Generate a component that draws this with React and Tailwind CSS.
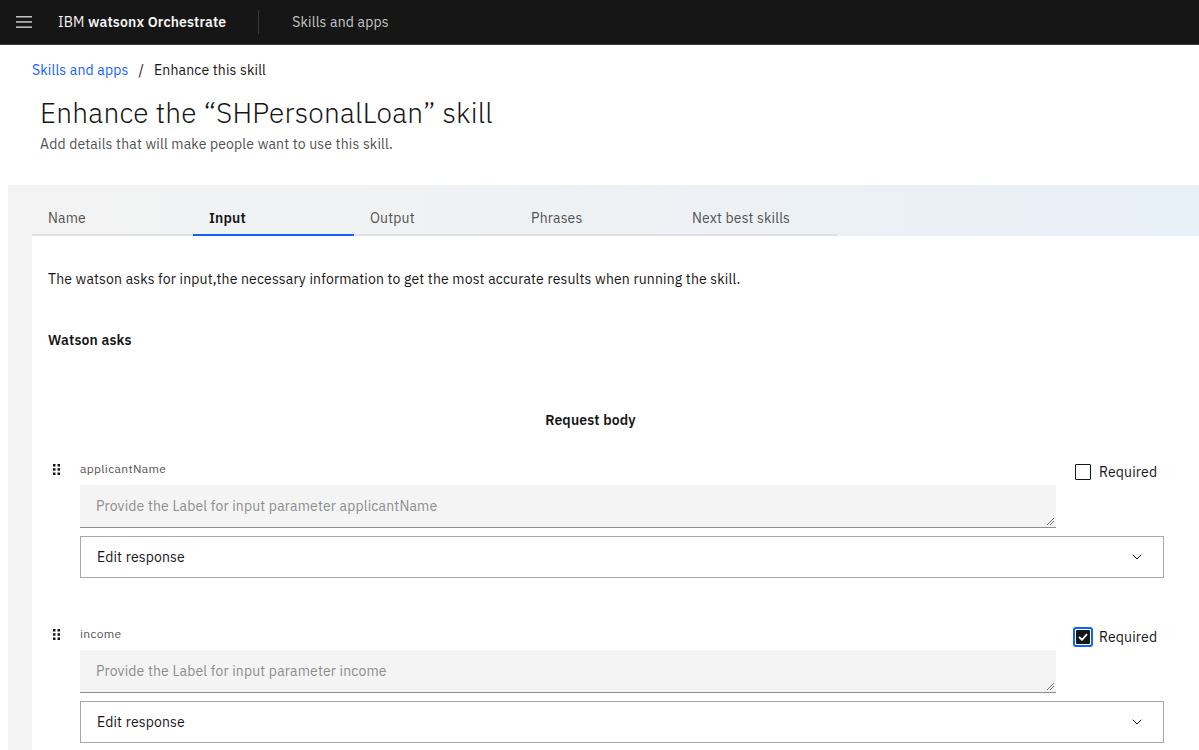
import { ChevronDown } from "lucide-react";

const tabs = ["Name", "Input", "Output", "Phrases", "Next best skills"];

const params = [
    { name: "applicantName", required: false },
    { name: "income", required: true },
];

const DragHandle = () => (
    <svg width="7" height="11" viewBox="0 0 7 11" className="fill-[#161616]">
        <rect x="0" y="0" width="2.5" height="2.5" />
        <rect x="4.5" y="0" width="2.5" height="2.5" />
        <rect x="0" y="4.2" width="2.5" height="2.5" />
        <rect x="4.5" y="4.2" width="2.5" height="2.5" />
        <rect x="0" y="8.5" width="2.5" height="2.5" />
        <rect x="4.5" y="8.5" width="2.5" height="2.5" />
    </svg>
);

const ParamRow = ({ param }) => (
    <div className="flex">
        <div className="w-[48px] pl-[21px] pt-[3px] shrink-0">
            <DragHandle />
        </div>
        <div className="flex-1">
            <div className="flex">
                <div className="flex-1">
                    <div className="text-[12px] text-[#525252] h-[24px] leading-[16px] tracking-[0.32px]">
                        {param.name}
                    </div>
                    <div className="relative h-[43px] bg-[#f4f4f4] border-b border-[#8d8d8d] px-4 flex items-center text-[14px] text-[#8d8d8d]">
                        Provide the Label for input parameter {param.name}
                        <svg
                            width="8"
                            height="8"
                            viewBox="0 0 8 8"
                            className="absolute right-[2px] bottom-[2px] stroke-[#6f6f6f]"
                        >
                            <line x1="1" y1="8" x2="8" y2="1" />
                            <line x1="4" y1="8" x2="8" y2="4" />
                        </svg>
                    </div>
                </div>
                <div className="w-[143px] pl-[19px] shrink-0">
                    <label className="flex items-center gap-2 text-[14px] text-[#161616] h-[16px] mt-[3px]">
                        {param.required ? (
                            <span className="w-[20px] h-[20px] border-2 border-[#0f62fe] rounded-[3px] flex items-center justify-center -ml-[2px] -mr-[2px]">
                                <span className="w-[14px] h-[14px] bg-[#161616] rounded-[1px] flex items-center justify-center">
                                    <svg width="10" height="8" viewBox="0 0 10 8" fill="none" stroke="white" strokeWidth="1.8">
                                        <path d="M1 4 L4 6.8 L9 1.2" />
                                    </svg>
                                </span>
                            </span>
                        ) : (
                            <span className="w-[16px] h-[16px] border border-[#161616] rounded-[1px]" />
                        )}
                        Required
                    </label>
                </div>
            </div>
            <div className="mt-[8px] mr-[35px] h-[42px] border border-[#a8a8a8] flex items-center justify-between pl-4 pr-[18px] text-[14px] text-[#161616]">
                <span>Edit response</span>
                <ChevronDown size={16} strokeWidth={1.5} />
            </div>
        </div>
    </div>
);

export default function App() {
    return (
        <div className="bg-white font-['IBM_Plex_Sans','Roboto',sans-serif] tracking-[0.16px] text-[#161616] overflow-hidden h-[750px]">
            <header className="h-[45px] bg-[#161616] border-b border-[#393939] flex items-center text-[14px]">
                <div className="w-[48px] flex items-center justify-center">
                    <svg width="16" height="14" viewBox="0 0 16 14" className="fill-[#c6c6c6]">
                        <rect x="0" y="1" width="16" height="1.5" />
                        <rect x="0" y="6.2" width="16" height="1.5" />
                        <rect x="0" y="11.4" width="16" height="1.5" />
                    </svg>
                </div>
                <div className="pl-[10px] pr-[32px] text-[#f4f4f4] flex items-center border-r border-[#393939] h-[24px]">
                    IBM&nbsp;<span className="font-semibold">watsonx Orchestrate</span>
                </div>
                <div className="pl-[33px] text-[#c6c6c6]">Skills and apps</div>
            </header>

            <div className="pl-[32px] pt-[15px] text-[14px] flex gap-[10px]">
                <span className="text-[#0f62fe]">Skills and apps</span>
                <span>/</span>
                <span>Enhance this skill</span>
            </div>

            <div className="pl-[40px] pt-[14px]">
                <h1 className="text-[28px] font-light leading-[36px] tracking-[0.25px]">
                    Enhance the “SHPersonalLoan” skill
                </h1>
                <p className="text-[14px] text-[#525252] mt-[3px]">
                    Add details that will make people want to use this skill.
                </p>
            </div>

            <div className="ml-[8px] mt-[30px] bg-gradient-to-r from-[#f3f3f3] via-[#eef1f4] to-[#e8f0f8] pl-[24px] pt-[23px]">
                <div className="flex">
                    {tabs.map((t) => (
                        <div
                            key={t}
                            className={`w-[161px] h-[28px] pl-[16px] text-[14px] border-b-2 ${
                                t === "Input"
                                    ? "border-[#0f62fe] text-[#161616] font-semibold"
                                    : "border-[#e0e0e0] text-[#525252]"
                            }`}
                        >
                            {t}
                        </div>
                    ))}
                </div>
                <div className="bg-white h-[600px]">
                    <p className="pl-[16px] pt-[33px] text-[14px]">
                        The watson asks for input,the necessary information to get the
                        most accurate results when running the skill.
                    </p>
                    <p className="pl-[16px] pt-[40px] text-[14px] font-semibold">
                        Watson asks
                    </p>
                    <p className="pt-[59px] text-[14px] font-semibold text-center pr-[50px]">
                        Request body
                    </p>
                    <div className="mt-[30px] flex flex-col gap-[48px]">
                        {params.map((p) => (
                            <ParamRow key={p.name} param={p} />
                        ))}
                    </div>
                </div>
            </div>
        </div>
    );
}
